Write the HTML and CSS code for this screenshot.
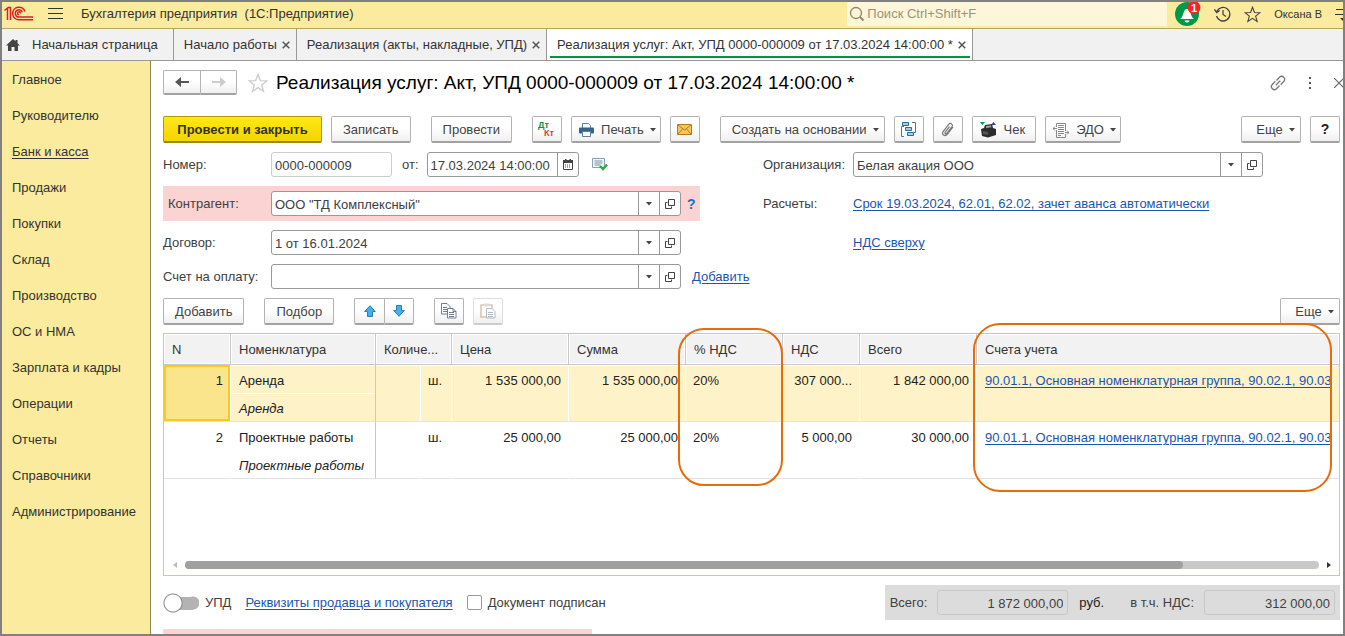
FILE: index.html
```html
<!DOCTYPE html>
<html lang="ru">
<head>
<meta charset="utf-8">
<title>Бухгалтерия предприятия</title>
<link rel="stylesheet" href="styles.css">
</head>
<body>
<svg class="defs" width="0" height="0" aria-hidden="true">
  <symbol id="open" viewBox="0 0 10 10"><path d="M3.5.5h6v6h-6zM2.500 3.500h-2v6h6v-2" fill="none" stroke="#444"/></symbol>
  <symbol id="x" viewBox="0 0 8 8"><path d="M.7.7l6.600 6.600M7.300.7L.7 7.300" stroke="#555" stroke-width="1.500"/></symbol>
  <symbol id="caret" viewBox="0 0 6 4"><path d="M0 0h6L3 3.500z" fill="#444"/></symbol>
  <symbol id="star" viewBox="0 0 20 20"><path d="M10 1.500l2.300 6.100 6.500.3-5.100 4 1.800 6.300L10 14.600l-5.500 3.600 1.800-6.300-5.100-4 6.500-.3z" fill="none" stroke="currentColor" stroke-width="1.300"/></symbol>
</svg>
<div class="app">
  <header class="topbar">
    <svg class="logo" width="30" height="16" viewBox="0 0 30 16"><g fill="none" stroke="#dc1f26" stroke-width="1.500"><path d="M.5 4.500L3.500 2V14M3.500 1.500H6.500V14"/><path d="M21 5.500A6.300 6.300 0 1 0 15 13.800H29"/><path d="M18.300 6A3.600 3.600 0 1 0 15.200 11H29"/><path d="M16.600 7.500a1.500 1.500 0 1 0-1.500 1.200"/></g></svg>
    <button class="plain menu" aria-label="Меню"><svg width="15" height="12" viewBox="0 0 15 12"><path d="M0 .5h15M0 5.500h15M0 10.500h15" stroke="#333" stroke-width="1"/></svg></button>
    <span class="app-name">Бухгалтерия предприятия&nbsp; (1С:Предприятие)</span>
    <label class="search"><svg width="16" height="16" viewBox="0 0 16 16"><circle cx="7" cy="7" r="5.500" fill="none" stroke="#8d866a" stroke-width="1.300"/><path d="M11 11l3.500 3.500" stroke="#8d866a" stroke-width="2"/></svg><input type="text" placeholder="Поиск Ctrl+Shift+F" aria-label="Поиск"></label>
    <div class="user-tools">
      <button class="plain" aria-label="Уведомления"><svg width="26" height="26" viewBox="0 0 26 26"><circle cx="12" cy="13" r="12" fill="#00984a"/><path d="M5 18c2-1 2.500-3 3.500-6 .7-2.300 1.600-4 3.500-4s2.800 1.700 3.500 4c1 3 1.500 5 3.500 6z" fill="#fff"/><path d="M9.500 19.500h5a2.500 2 0 0 1-5 0z" fill="#fff"/><circle cx="19" cy="6.500" r="6.500" fill="#fa2222"/><text x="16" y="10.500" class="badge">1</text></svg></button>
      <button class="plain" aria-label="История"><svg width="17" height="16" viewBox="0 0 17 16"><path d="M2.800 5.500A6.800 6.800 0 1 1 2.500 10M.5 3.500l2.200 3 3-2M9 4v4.500l3 2" fill="none" stroke="#444" stroke-width="1.300"/></svg></button>
      <button class="plain" aria-label="Избранное"><svg width="17" height="17"><use href="#star"/></svg></button>
      <span class="user">Оксана В</span>
      <button class="plain clip" aria-label="Настройки"><svg width="8" height="13" viewBox="0 0 8 13"><path d="M1 1.500h7M0 6.500h8" stroke="#333"/><path d="M5 10h6l-3 3z" fill="#333"/></svg></button>
    </div>
  </header>

  <nav class="tabs">
    <a href="#" class="tab home"><svg width="14" height="13" viewBox="0 0 14 13"><path d="M7 0L0 6.500h2V12h3.500V8h3v4H12V6.500h2L11.500 4.200V1h-2v1.300z" fill="#444"/></svg>Начальная страница</a>
    <a href="#" class="tab">Начало работы<svg width="8" height="8"><use href="#x"/></svg></a>
    <a href="#" class="tab">Реализация (акты, накладные, УПД)<svg width="8" height="8"><use href="#x"/></svg></a>
    <a href="#" class="tab active">Реализация услуг: Акт, УПД 0000-000009 от 17.03.2024 14:00:00 *<svg width="8" height="8"><use href="#x"/></svg></a>
  </nav>

  <div class="body">
    <nav class="sidebar">
      <a href="#">Главное</a><a href="#">Руководителю</a><a href="#" class="current">Банк и касса</a><a href="#">Продажи</a><a href="#">Покупки</a><a href="#">Склад</a><a href="#">Производство</a><a href="#">ОС и НМА</a><a href="#">Зарплата и кадры</a><a href="#">Операции</a><a href="#">Отчеты</a><a href="#">Справочники</a><a href="#">Администрирование</a>
    </nav>

    <main class="content">
      <div class="title-row">
        <div class="pair nav-pair">
          <button class="btn" aria-label="Назад"><svg width="14" height="12" viewBox="0 0 14 12"><path d="M0 6l6-5v4h8v2H6v4z" fill="#555"/></svg></button>
          <button class="btn" aria-label="Вперед"><svg width="14" height="12" viewBox="0 0 14 12"><path d="M14 6L8 1v4H0v2h8v4z" fill="#ccc"/></svg></button>
        </div>
        <button class="plain fav" aria-label="В избранное"><svg width="20" height="20"><use href="#star"/></svg></button>
        <h1>Реализация услуг: Акт, УПД 0000-000009 от 17.03.2024 14:00:00 *</h1>
        <div class="window-tools">
          <button class="plain" aria-label="Ссылка"><svg width="16" height="16" viewBox="0 0 16 16"><g fill="none" stroke="#777" stroke-width="1.300"><path d="M6.500 5.500l3-3.200a2.900 2.900 0 0 1 4.200 4.200l-3 3.200M9.500 10.500l-3 3.200a2.900 2.900 0 0 1-4.200-4.200l3-3.200M5.800 10.200l4.400-4.400"/></g></svg></button>
          <button class="plain" aria-label="Дополнительно"><svg width="4" height="12" viewBox="0 0 4 12"><path d="M1 0h2v2H1zM1 5h2v2H1zM1 10h2v2H1z" fill="#555"/></svg></button>
          <button class="plain clip" aria-label="Закрыть"><svg width="9" height="10" viewBox="0 0 9 10"><path d="M0 0l10 10M0 10L10 0" stroke="#666" stroke-width="1.200"/></svg></button>
        </div>
      </div>

      <div class="toolbar">
        <div class="group">
          <button class="btn primary">Провести и закрыть</button>
          <button class="btn">Записать</button>
        </div>
        <div class="group"><button class="btn">Провести</button></div>
        <div class="group">
          <button class="btn icon" aria-label="Дт Кт"><svg width="18" height="18" viewBox="0 0 18 18"><text x="0" y="8" class="dt">Дт</text><text x="6" y="16" class="kt">Кт</text></svg></button>
          <button class="btn print"><svg width="15" height="14" viewBox="0 0 15 14"><path d="M3.500 5V.5h6l2 2V5" fill="#fff" stroke="#5d7f9c"/><rect y="4.500" width="15" height="6" rx="1" fill="#33658c"/><path d="M3.500 8.500h8v5h-8z" fill="#fff" stroke="#5d7f9c"/></svg>Печать<svg class="caret" width="6" height="4"><use href="#caret"/></svg></button>
          <button class="btn icon" aria-label="Отправить"><svg width="15" height="11" viewBox="0 0 15 11"><path d="M.5.5h14v10H.5z" fill="#f7c65a" stroke="#b97a1e"/><path d="M1 1l6.500 5L14 1M1 10l4.500-5M14 10L9.500 5" fill="none" stroke="#b97a1e"/></svg></button>
        </div>
        <div class="group">
          <button class="btn">Создать на основании<svg class="caret" width="6" height="4"><use href="#caret"/></svg></button>
          <button class="btn icon" aria-label="Структура подчиненности"><svg width="15" height="15" viewBox="0 0 15 15"><path d="M3 4.500H.5v10H3M11 .5h3.500v10H13" fill="none" stroke="#3d7ba8"/><path d="M1.500.5h6v3h-6zM4.500 5.500h6v3h-6zM6.500 10.500h6v3h-6z" fill="#a9cce3" stroke="#2d6a98"/></svg></button>
          <button class="btn icon" aria-label="Файлы"><svg width="14" height="15" viewBox="0 0 14 15"><path d="M12 5L6.500 12.200c-2.800 3-6.400.2-4.400-2.600l5.400-7c2-2.400 5-.2 3.400 2.200L6 11.200c-1.200 1.300-2.600.2-1.800-1L8.500 4.700" fill="none" stroke="#777" stroke-width="1.200"/></svg></button>
          <button class="btn check"><svg width="17" height="16" viewBox="0 0 17 16"><path d="M0 0h5L2.500 3z" fill="#00a04a"/><path d="M11 3h5l-2.500-3z" fill="#3333bb"/><path d="M1 7l3-1 1-3 7-1 1 4 3 1v6l-8 2.500L2 14z" fill="#2c2c2c"/><path d="M6 4l5-.7.5 2-5.500 1z" fill="#999"/><path d="M3 9l5 1v3l-5-1z" fill="#555"/></svg>Чек</button>
          <button class="btn edo"><svg width="16" height="15" viewBox="0 0 16 15"><g fill="none" stroke="#888"><path d="M3.500 4V.5h9V8M12.500 11v3.500h-9V7M5 2.500h6M5 4.500h6M5 6.500h6M5 8.500h6M5 10.500h6M5 12.500h3"/><path d="M0 5.500h4M12 9.500h4M2 3.500l-2 2 2 2M14 7.500l2 2-2 2"/></g></svg>ЭДО<svg class="caret" width="6" height="4"><use href="#caret"/></svg></button>
        </div>
        <div class="group end">
          <button class="btn more">Еще<svg class="caret" width="6" height="4"><use href="#caret"/></svg></button>
          <button class="btn icon help">?</button>
        </div>
      </div>

      <div class="form">
        <div class="row">
          <label class="lbl" for="num">Номер:</label>
          <input class="box number" id="num" type="text" value="0000-000009">
          <label class="from" for="date">от:</label>
          <div class="field date"><input id="date" type="text" value="17.03.2024 14:00:00"><button aria-label="Календарь"><svg width="10" height="11" viewBox="0 0 10 11"><path d="M.5 2h9v8.500h-9z" fill="none" stroke="#444"/><path d="M0 1h10v3H0zM2 0h1.500v2H2zM6.500 0H8v2H6.500z" fill="#444"/><path d="M2 6h6M2 8h6" stroke="#444" stroke-dasharray="1 1"/></svg></button></div>
          <svg class="posted" width="16" height="13" viewBox="0 0 16 13"><path d="M.5.5h12v9H.5z" fill="#f2f6fa" stroke="#8aa0b5"/><path d="M2.500 3h8M2.500 5h8M2.500 7h6" stroke="#7b91a8"/><path d="M8 8l3 3 4-4.500" fill="none" stroke="#2aae34" stroke-width="2.400"/></svg>
        </div>
        <div class="row">
          <label class="lbl" for="org">Организация:</label>
          <div class="field"><input id="org" type="text" value="Белая акация ООО"><button aria-label="Выбрать"><svg width="6" height="4"><use href="#caret"/></svg></button><button aria-label="Открыть"><svg width="10" height="10"><use href="#open"/></svg></button></div>
        </div>
        <div class="row required">
          <label class="lbl" for="agent">Контрагент:</label>
          <div class="field"><input id="agent" type="text" value="ООО &quot;ТД Комплексный&quot;"><button aria-label="Выбрать"><svg width="6" height="4"><use href="#caret"/></svg></button><button aria-label="Открыть"><svg width="10" height="10"><use href="#open"/></svg></button></div>
          <button class="plain hint">?</button>
        </div>
        <div class="row"><span class="lbl">Расчеты:</span><a href="#">Срок 19.03.2024, 62.01, 62.02, зачет аванса автоматически</a></div>
        <div class="row">
          <label class="lbl" for="contract">Договор:</label>
          <div class="field"><input id="contract" type="text" value="1 от 16.01.2024"><button aria-label="Выбрать"><svg width="6" height="4"><use href="#caret"/></svg></button><button aria-label="Открыть"><svg width="10" height="10"><use href="#open"/></svg></button></div>
        </div>
        <div class="row"><span class="lbl"></span><a href="#">НДС сверху</a></div>
        <div class="row">
          <label class="lbl" for="bill">Счет на оплату:</label>
          <div class="field"><input id="bill" type="text" value=""><button aria-label="Выбрать"><svg width="6" height="4"><use href="#caret"/></svg></button><button aria-label="Открыть"><svg width="10" height="10"><use href="#open"/></svg></button></div>
          <a href="#" class="add">Добавить</a>
        </div>
      </div>

      <div class="toolbar lines-bar">
        <button class="btn">Добавить</button>
        <button class="btn">Подбор</button>
        <div class="pair">
          <button class="btn icon" aria-label="Вверх"><svg width="12" height="12" viewBox="0 0 12 12"><path d="M6 .7l5.300 5.800H8.500v5h-5v-5H.7z" fill="#3fb0f0" stroke="#2c7fb5"/></svg></button>
          <button class="btn icon" aria-label="Вниз"><svg width="12" height="12" viewBox="0 0 12 12"><path d="M6 11.300L.7 5.500h2.800v-5h5v5h2.800z" fill="#3fb0f0" stroke="#2c7fb5"/></svg></button>
        </div>
        <div class="group">
          <button class="btn icon" aria-label="Копировать"><svg width="16" height="16" viewBox="0 0 16 16"><g fill="#fff" stroke="#6c7f95"><path d="M.5.500h5.500l3 3v7.500h-8.500z"/><path d="M6.500 5.500h5.500l3 3v6.500h-8.500z"/><path d="M2 4.500h4M2 6.500h4M2 8.500h4M8 9.500h5M8 11.500h5M8 13.500h5M12 5.500v3h3" fill="none"/></g></svg></button>
          <button class="btn icon disabled" aria-label="Вставить"><svg width="16" height="16" viewBox="0 0 16 16"><path d="M1 2h11v12H1z" fill="#fff" stroke="#c98f6a" stroke-width="1.600"/><path d="M4 .5h5v3H4z" fill="#bbb"/><path d="M6.500 5.500H12l3 3v6.500H6.500zM8 9.500h5M8 11.500h5M8 13.500h5" fill="#fff" stroke="#6c7f95"/></svg></button>
        </div>
        <div class="group end"><button class="btn more">Еще<svg class="caret" width="6" height="4"><use href="#caret"/></svg></button></div>
      </div>

      <div class="grid-box">
        <table>
          <colgroup><col class="c-n"><col class="c-name"><col class="c-qty"><col class="c-unit"><col class="c-sum"><col class="c-sum"><col class="c-rate"><col class="c-vat"><col class="c-sum"><col></colgroup>
          <thead><tr><th>N</th><th>Номенклатура</th><th colspan="2">Количе...</th><th>Цена</th><th>Сумма</th><th>% НДС</th><th>НДС</th><th>Всего</th><th>Счета учета</th></tr></thead>
          <tbody class="selected">
            <tr><td rowspan="2" class="num cell-active">1</td><td class="name">Аренда</td><td rowspan="2"></td><td rowspan="2">ш.</td><td rowspan="2" class="num">1 535 000,00</td><td rowspan="2" class="num">1 535 000,00</td><td rowspan="2">20%</td><td rowspan="2" class="num">307 000...</td><td rowspan="2" class="num">1 842 000,00</td><td rowspan="2" class="accounts"><a href="#">90.01.1, Основная номенклатурная группа, 90.02.1, 90.03</a></td></tr>
            <tr><td class="name desc">Аренда</td></tr>
          </tbody>
          <tbody>
            <tr><td rowspan="2" class="num">2</td><td class="name">Проектные работы</td><td rowspan="2"></td><td rowspan="2">ш.</td><td rowspan="2" class="num">25 000,00</td><td rowspan="2" class="num">25 000,00</td><td rowspan="2">20%</td><td rowspan="2" class="num">5 000,00</td><td rowspan="2" class="num">30 000,00</td><td rowspan="2" class="accounts"><a href="#">90.01.1, Основная номенклатурная группа, 90.02.1, 90.03</a></td></tr>
            <tr><td class="name desc">Проектные работы</td></tr>
          </tbody>
        </table>
        <div class="scroll">
          <svg width="4" height="6" viewBox="0 0 4 6"><path d="M4 0v6L0 3z" fill="#bbb"/></svg>
          <div class="track"><div class="thumb"></div></div>
          <svg width="4" height="6" viewBox="0 0 4 6"><path d="M0 0v6l4-3z" fill="#333"/></svg>
        </div>
        <div class="mark mark-rate"></div>
        <div class="mark mark-accounts"></div>
      </div>

      <div class="footer">
        <label class="switch-label"><input type="checkbox" class="switch">УПД</label>
        <a href="#">Реквизиты продавца и покупателя</a>
        <label class="signed"><input type="checkbox" class="tick">Документ подписан</label>
        <div class="totals">
          <label for="total">Всего:</label><input id="total" type="text" readonly value="1 872 000,00"><span class="currency">руб.</span>
          <label for="vat">в т.ч. НДС:</label><input id="vat" type="text" readonly value="312 000,00">
        </div>
      </div>
      <div class="notice"></div>
    </main>
  </div>
</div>
</body>
</html>
```
FILE: styles.css
```css
* { box-sizing: border-box; }
body { margin: 0; font: 13px/16px "Liberation Sans", Arial, sans-serif; color: #404040; }
button, input { font: inherit; color: inherit; margin: 0; }
svg { display: block; flex: none; }
a { color: #1a56b0; text-underline-offset: 2px; }
.defs { position: absolute; }
.app { height: 100vh; display: flex; flex-direction: column; border: 2px solid #808080; background: #fff; overflow: hidden; }
.plain { border: 0; padding: 0; background: none; display: flex; align-items: center; }

.topbar { flex: none; height: 27px; display: flex; align-items: center; padding: 0 0 2px 2px; background: #fbeb9e; border-bottom: 1px solid #b5a468; overflow: hidden; color: #333; }
.logo { margin-right: 14px; }
.menu { margin-right: 18px; }
.app-name { white-space: nowrap; }
.search { display: flex; align-items: center; width: 320px; height: 24px; margin-left: auto; padding-left: 2px; background: #fdf6d8; border-radius: 2px; color: #8d866a; }
.search input { flex: 1; min-width: 0; border: 0; padding: 0 2px; background: none; outline: 0; }
.search input::placeholder { color: #99937a; opacity: 1; }
.user-tools { display: flex; align-items: center; gap: 13px; padding-left: 8px; color: #444; }
.user { font-size: 11px; color: #333; white-space: nowrap; }
.badge { font: bold 11px "Liberation Sans", Arial, sans-serif; fill: #fff; }

.tabs { flex: none; height: 32px; display: flex; background: #f1f1f1; border-bottom: 1px solid #999; }
.tab { display: flex; align-items: center; gap: 5px; padding: 1px 6px 0 10px; border-right: 1px solid #999; color: #333; text-decoration: none; white-space: nowrap; }
.home { gap: 12px; padding: 1px 15px 0 4px; }
.active { background: linear-gradient(#009646, #009646) 3px 27px / calc(100% - 5px) 2px no-repeat #fff; }

.body { flex: 1; min-height: 0; display: flex; }
.sidebar { flex: none; width: 149px; padding-top: 1px; background: #fbeb9e; border-right: 1px solid #8f8656; }
.sidebar a { display: block; padding: 10px; color: #333; text-decoration: none; white-space: nowrap; }
.sidebar .current { text-decoration: underline; }
.content { flex: 1; min-width: 0; display: flex; flex-direction: column; padding: 9px 3px 0 12px; }

.btn { height: 27px; display: flex; align-items: center; justify-content: center; padding: 2px 11px 0; border: 1px solid #b3b3b3; border-bottom: 2px solid #a2a2a2; border-radius: 2px; background: linear-gradient(#fff 45%, #f0f0f0); color: #444; white-space: nowrap; }
.btn .caret { margin-left: 6px; margin-right: -6px; }
.icon { width: 30px; padding: 0; }
.primary { min-width: 159px; padding: 2px 0 0; font-weight: bold; color: #333; background: linear-gradient(#ffe817, #f5d400); border-color: #b39b00; border-bottom-color: #9a8600; }
.pair { display: flex; }
.pair .btn:first-child { border-radius: 2px 0 0 2px; border-right: 0; }
.pair .btn:last-child { border-radius: 0 2px 2px 0; }
.title-row { display: flex; align-items: center; height: 25px; }
.nav-pair .btn { width: 37px; height: 25px; padding: 0; }
.fav { margin: 0 8px 0 11px; color: #ccc; }
h1 { margin: 0; font: 19px/24px "Liberation Sans", Arial, sans-serif; color: #000; white-space: nowrap; }
.window-tools { display: flex; align-items: center; gap: 22px; margin: 0 -3px 0 auto; }

.toolbar { display: flex; gap: 20px; margin-top: 21px; }
.group { display: flex; gap: 9px; }
.end { margin-left: auto; }
.print svg:first-child, .check svg, .edo svg:first-child { margin-right: 7px; }
.print, .check, .edo { padding: 2px 10px 0 7px; }
.more { width: 60px; padding-left: 14px; }
.help { font-weight: bold; font-size: 14px; color: #222; }
.dt, .kt { font: bold 9px "Liberation Sans", Arial, sans-serif; fill: #00964a; }
.kt { fill: #e04040; }

.form { display: grid; grid-template-columns: 537px minmax(0, 1fr); column-gap: 63px; row-gap: 9px; margin-top: 9px; grid-template-rows: 25px 35px 25px 25px; }
.row { display: flex; align-items: center; white-space: nowrap; }
.lbl { flex: none; width: 108px; }
.row:nth-child(even) .lbl { width: 90px; }
.required { background: #fbd3d3; padding-left: 5px; }
.required .lbl { width: 103px; }
.box, .field { height: 25px; border: 1px solid #999; border-radius: 3px; background: #fff; color: #404040; }
.box { padding: 2px 3px 0; }
.number { width: 121px; border-color: #ccc; }
.from { margin: 0 8px 0 10px; }
.field { flex: none; width: 410px; display: flex; }
.field input { flex: 1; min-width: 0; border: 0; padding: 2px 3px 0; background: none; outline: 0; }
.field button { width: 21px; border: 0; border-left: 1px solid #999; padding: 0; background: none; display: flex; align-items: center; justify-content: center; }
.date { width: 152px; }
.posted { margin-left: 13px; }
.hint { margin-left: 6px; font-weight: bold; font-size: 14px; color: #1b72b8; }
.add { margin-left: 11px; }

.lines-bar { margin-top: 9px; }
.lines-bar .disabled { border-color: #ddd; border-bottom-color: #ccc; }
.disabled svg { opacity: .5; }

.grid-box { flex: 1; min-height: 0; position: relative; display: flex; flex-direction: column; justify-content: space-between; margin-top: 8px; border: 1px solid #c9c9a9; }
table { width: 100%; table-layout: fixed; border-collapse: separate; border-spacing: 0; color: #222; }
.c-n { width: 67px; } .c-name { width: 145px; } .c-qty { width: 45px; } .c-unit { width: 31px; }
.c-sum { width: 117px; } .c-rate { width: 97px; } .c-vat { width: 77px; }
th { height: 31px; padding: 2px 8px 0; text-align: left; font-weight: normal; color: #333; background: #f2f2f2; border-right: 1px solid #c9c9c9; border-bottom: 1px solid #c9c9c9; box-shadow: inset 0 0 0 1px #fff; white-space: nowrap; }
td { height: 28px; padding: 8px 7px 3px; vertical-align: top; white-space: nowrap; overflow: hidden; border-right: 1px solid transparent; }
td[rowspan], .desc { border-bottom: 1px solid #e2e2e2; }
th:last-child { border-right: 0; }
.num { text-align: right; }
.name { padding-left: 8px; border-right-color: #c9c9c9; }
.desc { height: 29px; font-style: italic; }
.selected td { background: #fef2c8; border-right-color: #fff; box-shadow: inset 0 1px #fff; }
.selected .name { border-right-color: #c9c9c9; }
.accounts { padding-left: 8px; }
.selected .accounts { border-right-color: #fef2c8; }
.selected .cell-active { background: #fae48c; box-shadow: inset 0 0 0 2px #fac81e; }
.scroll { display: flex; align-items: center; gap: 8px; padding: 0 8px 6px 9px; }
.track { flex: 1; height: 8px; border-radius: 4px; background: #c9c9c9; }
.thumb { width: 88%; height: 8px; border-radius: 4px; background: #a0a0a0; }
.mark { position: absolute; border: 2px solid #e46c0a; pointer-events: none; }
.mark-rate { left: 514px; top: -6px; width: 105px; height: 158px; border-radius: 26px; }
.mark-accounts { left: 809px; right: 7px; top: -11px; height: 169px; border-radius: 27px; }

.footer { flex: none; display: flex; align-items: center; height: 35px; margin-top: 9px; white-space: nowrap; }
.switch-label, .signed { display: flex; align-items: center; gap: 6px; margin-right: 14px; }
.signed { margin: 0 0 0 14px; }
.switch { appearance: none; width: 36px; height: 20px; background: radial-gradient(circle at 10px 10px, #fff 8px, #888 9px, transparent 10px), linear-gradient(#b3b3b3, #b3b3b3) 10px 4px / 20px 13px no-repeat, radial-gradient(circle at 30px 10px, #b3b3b3 6px, transparent 7px); }
.tick { appearance: none; width: 15px; height: 15px; border: 1px solid #999; border-radius: 2px; background: #fff; }
.totals { display: flex; align-items: center; height: 35px; margin-left: auto; padding: 0 5px; background: #dcdcdc; }
.totals input { width: 131px; height: 25px; margin-left: 10px; padding: 2px 4px 0; border: 1px solid #c8c8c8; border-radius: 3px; background: none; text-align: right; }
.currency { margin: 0 26px 0 11px; color: #222; }
.notice { flex: none; width: 429px; height: 5px; margin-top: 9px; background: #fbd3d3; }
```
